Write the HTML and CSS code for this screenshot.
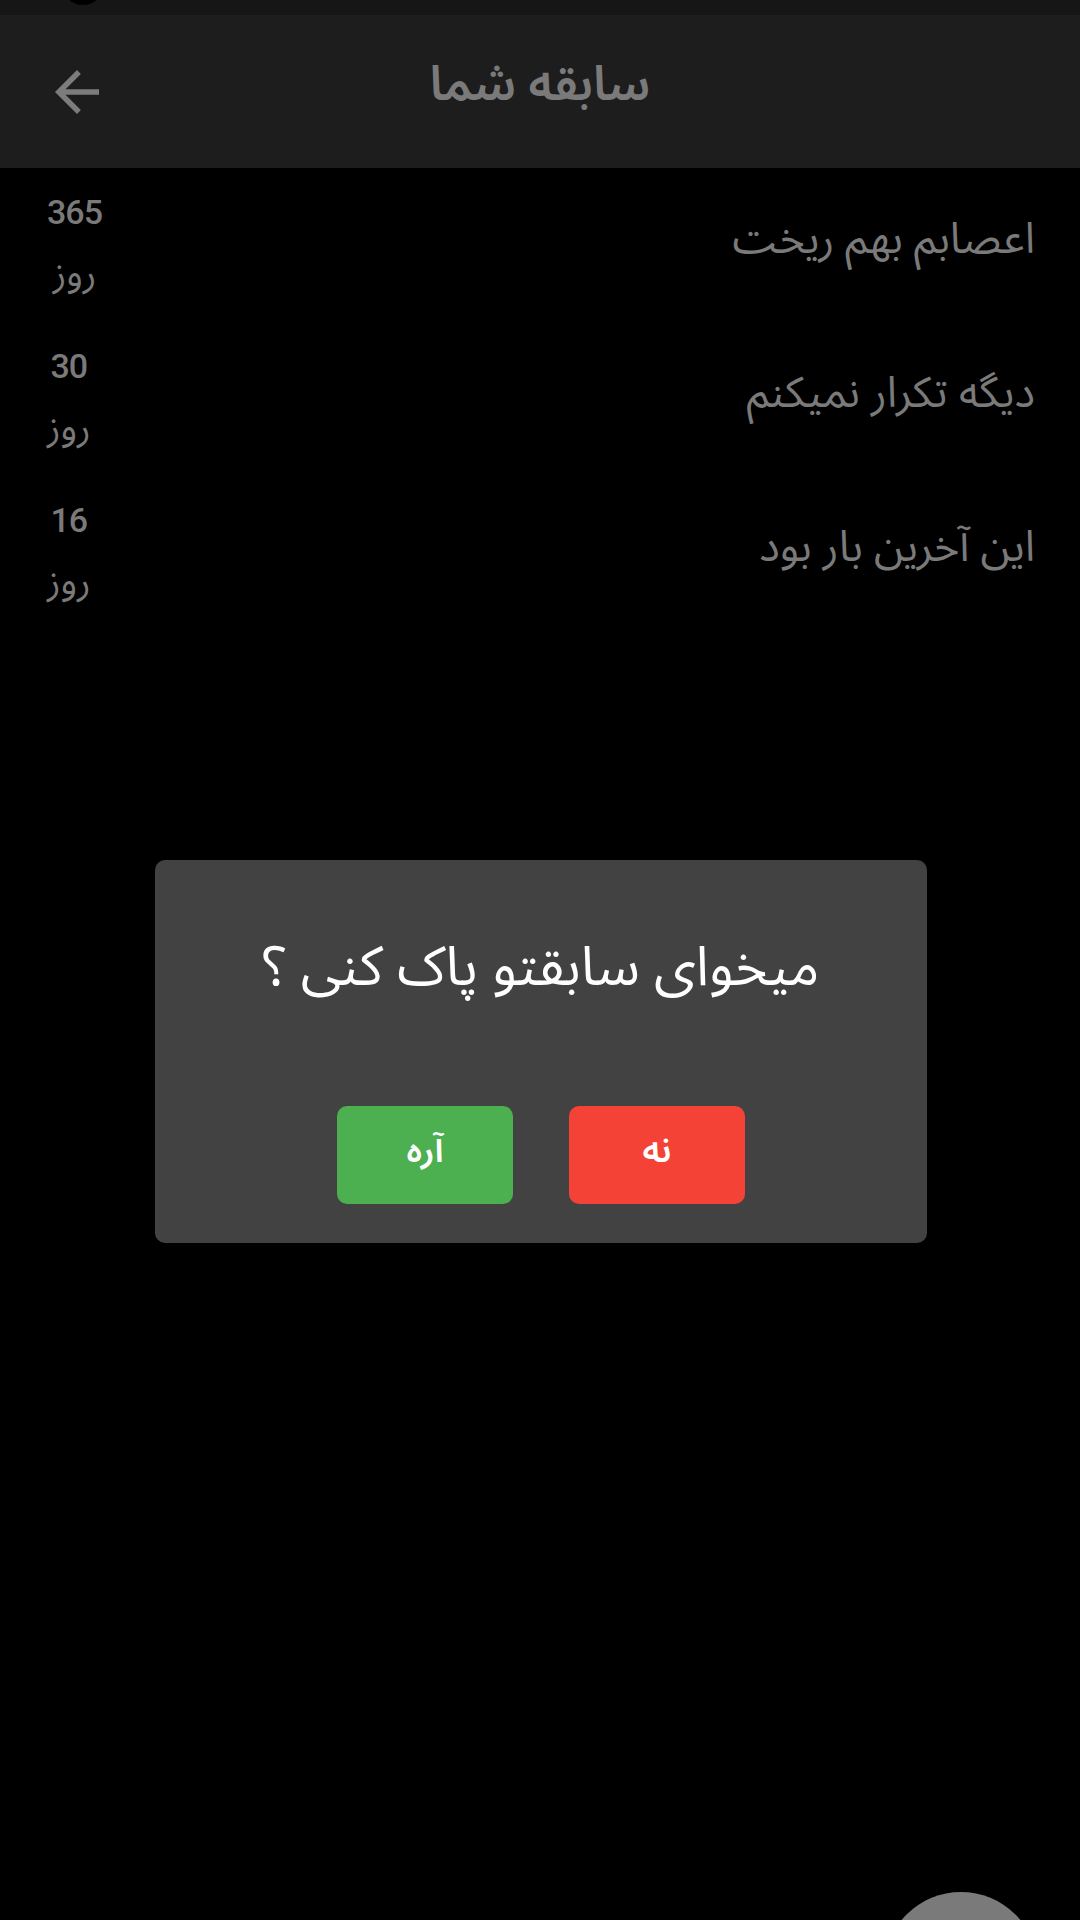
FILE: index.html
```html
<!DOCTYPE html>
<html lang="fa">
<head>
<meta charset="utf-8">
<title>سابقه شما</title>
<link rel="stylesheet" href="styles.css">
</head>
<body>
<div class="screen">
  <div class="statusbar"><div class="cutout"></div></div>
  <header class="appbar">
    <div class="back">
      <svg viewBox="0 0 24 24" width="66" height="66"><path fill="#7c7c7c" d="M20 11H7.83l5.59-5.59L12 4l-8 8 8 8 1.41-1.41L7.83 13H20v-2z"/></svg>
    </div>
    <h1 class="title" dir="rtl">سابقه شما</h1>
    <div></div>
  </header>
  <main class="list">
    <div class="row">
      <div class="count"><span class="num">365</span><span class="unit" dir="rtl">روز</span></div>
      <div class="label" dir="rtl">اعصابم بهم ریخت</div>
    </div>
    <div class="row">
      <div class="count"><span class="num">30</span><span class="unit" dir="rtl">روز</span></div>
      <div class="label" dir="rtl">دیگه تکرار نمیکنم</div>
    </div>
    <div class="row">
      <div class="count"><span class="num">16</span><span class="unit" dir="rtl">روز</span></div>
      <div class="label" dir="rtl">این آخرین بار بود</div>
    </div>
  </main>
  <div class="dialog" dir="rtl">
    <p class="question">میخوای سابقتو پاک کنی ؟</p>
    <div class="actions">
      <button class="btn no">نه</button>
      <button class="btn yes">آره</button>
    </div>
  </div>
  <div class="fab"></div>
</div>
</body>
</html>
```
FILE: styles.css
```css
html, body {
  margin: 0;
  padding: 0;
  background: #000;
}
body {
  font-family: "Noto Sans Arabic", "DejaVu Sans", "Noto Sans", sans-serif;
}
.screen {
  position: relative;
  width: 1080px;
  height: 1920px;
  overflow: hidden;
  background: #000;
}
.statusbar {
  height: 15px;
  background: #161616;
  overflow: hidden;
}
.cutout {
  width: 42px;
  height: 42px;
  border-radius: 50%;
  background: #000;
  margin-top: -37px;
  margin-left: 62px;
}
.appbar {
  height: 153px;
  background: #1d1d1d;
  display: grid;
  grid-template-columns: 1fr auto 1fr;
  align-items: center;
}
.back {
  padding-left: 44px;
  display: flex;
  align-items: center;
}
.back svg { display: block; }
.title {
  margin: 0;
  font-size: 48px;
  font-weight: 600;
  color: #7a7a7a;
  line-height: 1;
  padding-bottom: 14px;
}
.list {
  padding: 13px 45px 0 47px;
  display: flex;
  flex-direction: column;
  gap: 30px;
}
.row {
  display: flex;
  justify-content: space-between;
  align-items: center;
}
.count {
  display: flex;
  flex-direction: column;
  align-items: center;
  color: #7a7a7a;
}
.num {
  font-family: "Roboto", "Liberation Sans", sans-serif;
  font-weight: 500;
  font-size: 34px;
  line-height: 62px;
  letter-spacing: -1px;
}
.unit {
  font-size: 37px;
  line-height: 62px;
}
.label {
  font-size: 43px;
  color: #7a7a7a;
  padding-bottom: 8px;
}
.dialog {
  position: absolute;
  left: 155px;
  top: 860px;
  width: 772px;
  height: 383px;
  box-sizing: border-box;
  background: #424242;
  border-radius: 10px;
  padding-top: 78px;
  display: flex;
  flex-direction: column;
  align-items: center;
}
.question {
  margin: 0;
  color: #fff;
  font-size: 55px;
  line-height: 60px;
}
.actions {
  margin-top: 108px;
  display: flex;
  gap: 56px;
}
.btn {
  width: 176px;
  height: 98px;
  border: none;
  border-radius: 10px;
  color: #fff;
  font-family: inherit;
  font-size: 35px;
  font-weight: 600;
  padding: 0 0 8px;
}
.btn.no { background: #f44336; }
.btn.yes { background: #4caf50; }
.fab {
  position: absolute;
  left: 884px;
  top: 1892px;
  width: 154px;
  height: 154px;
  border-radius: 50%;
  background: #7a7a7a;
}
```
